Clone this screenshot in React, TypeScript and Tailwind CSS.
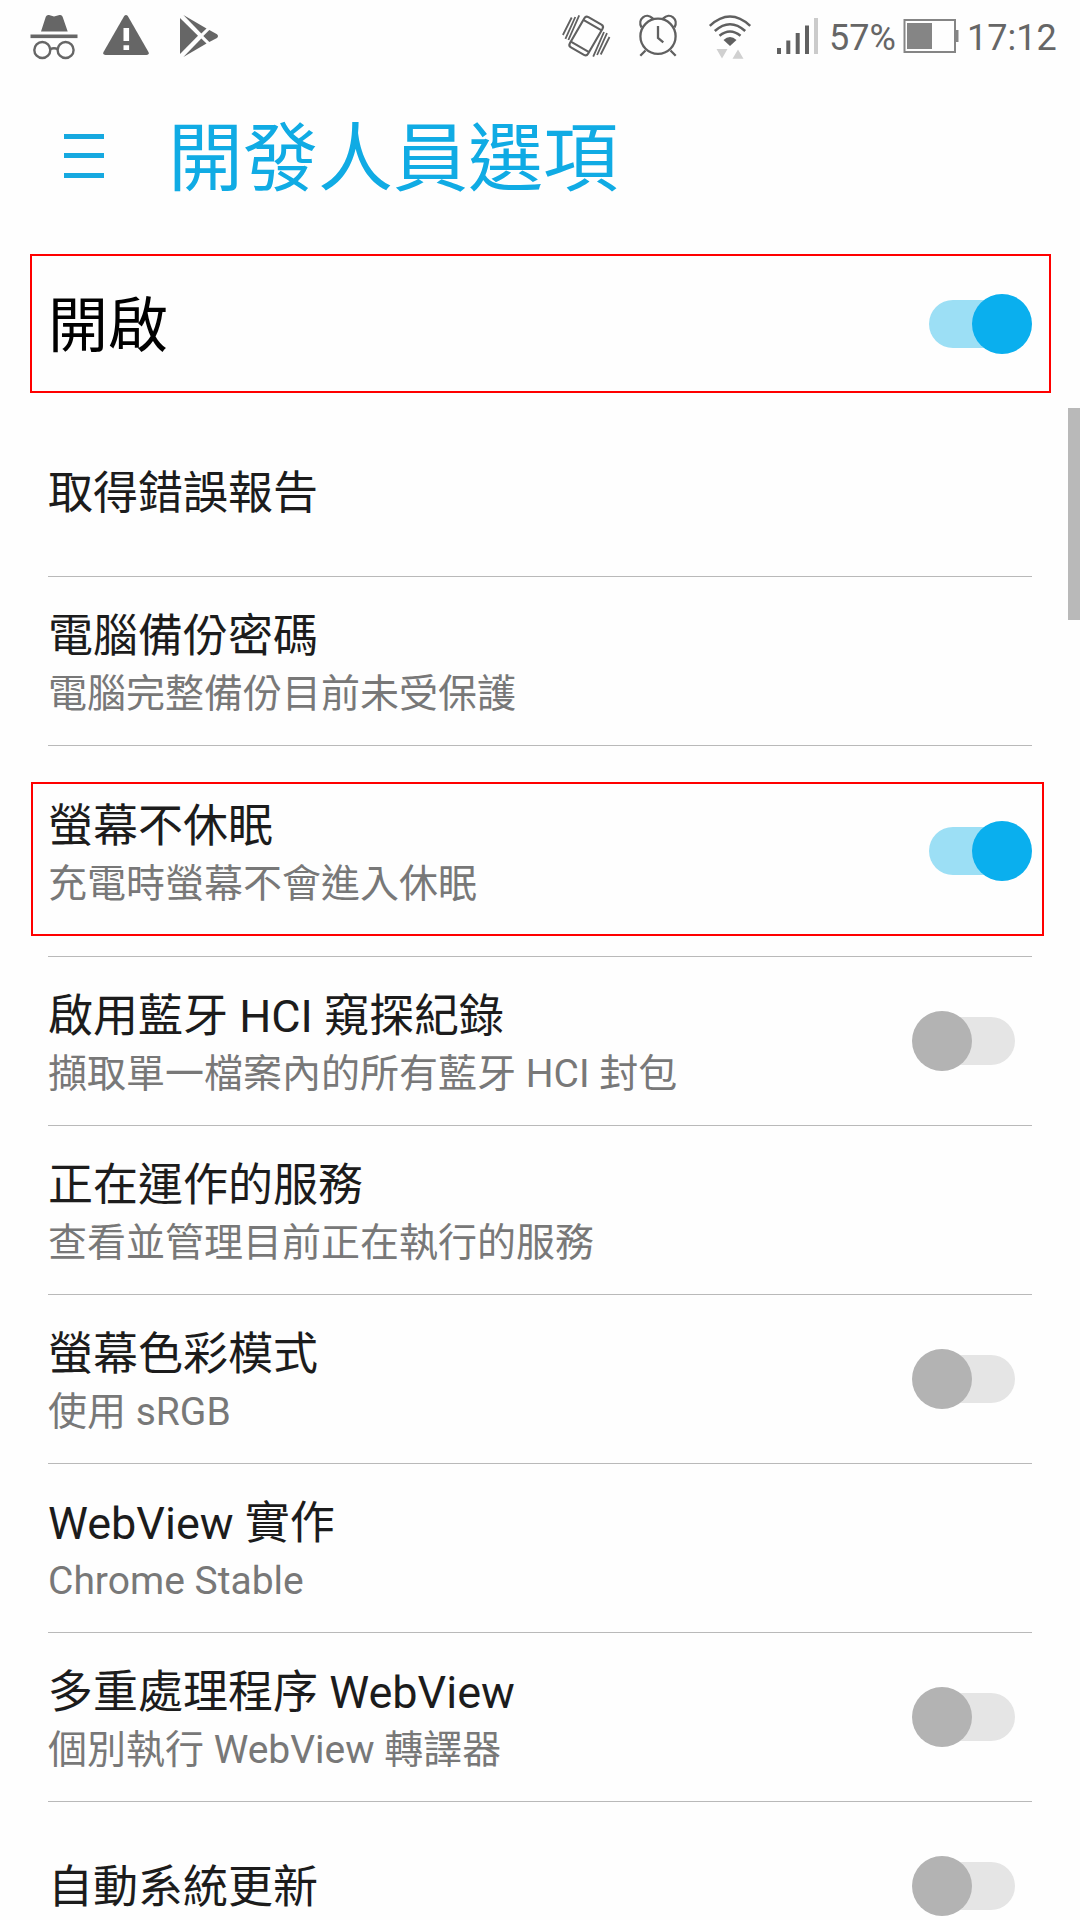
type Item = { title: string; summary?: string; on?: boolean; tall?: boolean };

const items: Item[] = [
  { title: '取得錯誤報告' },
  { title: '電腦備份密碼', summary: '電腦完整備份目前未受保護' },
  { title: '螢幕不休眠', summary: '充電時螢幕不會進入休眠', on: true, tall: true },
  { title: '啟用藍牙 HCI 窺探紀錄', summary: '擷取單一檔案內的所有藍牙 HCI 封包', on: false },
  { title: '正在運作的服務', summary: '查看並管理目前正在執行的服務' },
  { title: '螢幕色彩模式', summary: '使用 sRGB', on: false },
  { title: 'WebView 實作', summary: 'Chrome Stable' },
  { title: '多重處理程序 WebView', summary: '個別執行 WebView 轉譯器', on: false },
  { title: '自動系統更新', on: false },
];

function Switch({ on }: { on: boolean }) {
  return on ? (
    <div className="flex h-[60px] w-[103px] shrink-0 items-center">
      <div className="h-12 w-[84px] rounded-full bg-[#9cdff5]" />
      <div className="-ml-[41px] size-[60px] shrink-0 rounded-full bg-[#0aafee]" />
    </div>
  ) : (
    <div className="mr-[17px] flex h-[60px] w-[103px] shrink-0 items-center">
      <div className="z-10 size-[60px] shrink-0 rounded-full bg-[#b3b3b3]" />
      <div className="-ml-[41px] h-12 w-[84px] shrink-0 rounded-full bg-[#e5e5e5]" />
    </div>
  );
}

function StatusBar() {
  return (
    <header className="flex h-[72px] items-center text-[36px] leading-none text-[#666]">
      <svg className="ml-[30px] h-[72px] w-12" viewBox="30 0 48 72" fill="#666">
        <path d="M41 31.5 45.8 16.8Q46.8 14.6 49 15.1L54 16.6 59.5 15.1Q61.8 14.6 62.6 16.8L67.7 31.5Z" />
        <rect x="30.5" y="34.5" width="47" height="3.6" />
        <g fill="none" stroke="#666" strokeWidth="2.4">
          <circle cx="42.3" cy="50" r="8" />
          <circle cx="65.6" cy="50" r="8" />
          <path d="M50 49.3Q54 47.3 58 49.3" />
        </g>
      </svg>
      <svg className="ml-[25px] h-[72px] w-[46px]" viewBox="103 0 46 72">
        <path d="M124.2 16Q126 13.8 127.8 16L148.6 52.3Q149.3 55 146.5 55H105.5Q102.7 55 103.4 52.3Z" fill="#666" />
        <path d="M123.5 28h5.6v13h-5.6zM123.5 45.2h5.6v4.8h-5.6z" fill="#fff" />
      </svg>
      <svg className="ml-[31px] h-[72px] w-[39px]" viewBox="180 0 39 72" fill="#666">
        <path d="M180 18 198 35.8 180 54Z" />
        <path d="M183.4 15 206.5 28.5 201.3 33.5Z" />
        <path d="M183.4 57 206.5 43.6 201.3 38.6Z" />
        <path d="M209.3 30 217 34.2Q219 36 217 38L209.3 42 203.3 36Z" />
      </svg>
      <svg className="ml-[343px] h-[72px] w-[49px]" viewBox="562 0 49 72" fill="none" stroke="#606060" strokeWidth="2.1">
        <g transform="rotate(30 586.2 36)">
          <rect x="575.7" y="18.5" width="21" height="35" rx="3" />
          <path d="M575.7 23.5H596.7M575.7 48.5H596.7" />
        </g>
        <path
          d="M562.9 35 571.7 17.5M565.4 38.8 575.3 17M568.4 40 579.2 15.3M609.5 37 600.7 54.5M607 33.2 597.1 55M604 32 593.2 56.7"
          strokeWidth="1.8"
        />
      </svg>
      <svg className="ml-[27px] h-[72px] w-10" viewBox="638 0 40 72" fill="none" stroke="#606060" strokeWidth="2.3">
        <circle cx="658" cy="36.3" r="17.6" />
        <path d="M658 26V38L663.3 42.3" />
        <path d="M645.5 50.5 640.3 55.8M670.5 50.5 675.7 55.8" />
        <path d="M641.5 27.5C637 19.5 646 11.5 653 18.6M674.5 27.5C679 19.5 670 11.5 663 18.6" />
      </svg>
      <svg className="ml-[30px] h-[72px] w-11" viewBox="708 0 44 72" fill="none" stroke="#606060" strokeWidth="2.5">
        <path d="M709.8 25.8Q730 7.2 750.2 25.8" />
        <path d="M714.8 31Q730 17.4 745.2 31" />
        <path d="M719.5 35.8Q730 27.2 740.5 35.8" />
        <path d="M723.5 39.9Q730 34.3 736.5 39.9L730 46Z" fill="#606060" stroke="none" />
        <path d="M716.5 49H727.5L722 58.5ZM732.5 58.8H743.5L738 49.5Z" fill="#d0d0d0" stroke="none" />
      </svg>
      <svg className="ml-[25px] h-[72px] w-[42px]" viewBox="777 0 42 72" fill="#606060">
        <path d="M777 48h4v6h-4zM786.3 40.5h4V54h-4zM795.7 33h4v21h-4zM805 25.5h4V54h-4z" />
        <path d="M814 18h4v36h-4z" fill="#cbcbcb" />
      </svg>
      <span className="ml-[10px] w-[74px] whitespace-nowrap pt-1">57%</span>
      <svg className="h-[72px] w-[56px]" viewBox="903 0 56 72">
        <rect x="904.5" y="20" width="50.5" height="32" fill="none" stroke="#858585" strokeWidth="2" />
        <path d="M907 23h25v26h-25zM955 30h3.5v12H955z" fill="#858585" />
      </svg>
      <span className="ml-[8px] whitespace-nowrap pt-1">17:12</span>
    </header>
  );
}

export default function App() {
  return (
    <div
      lang="zh-Hant"
      className="relative h-[1920px] w-[1080px] overflow-hidden bg-[#fefefe] font-['Roboto','Noto_Sans_CJK_TC',sans-serif]"
    >
      <StatusBar />
      <div className="flex h-[168px] items-center pl-16">
        <div className="-mt-px flex w-10 flex-col gap-[14.5px]">
          <div className="h-[5px] bg-[#16a9e0]" />
          <div className="h-[5px] bg-[#16a9e0]" />
          <div className="h-[5px] bg-[#16a9e0]" />
        </div>
        <h1 className="ml-[64px] pt-[6px] text-[75px] leading-none text-[#10abe4]">開發人員選項</h1>
      </div>
      <div className="flex h-[168px] items-center justify-between px-12 text-black">
        <span className="pt-[6px] text-[60px] leading-none">開啟</span>
        <Switch on />
      </div>
      <ul>
        {items.map((item) => (
          <li
            key={item.title}
            className={`mx-12 flex items-center justify-between border-b border-[#b9b9b9] ${item.tall ? 'h-[211px]' : 'h-[169px]'}`}
          >
            <div className={`flex flex-col ${item.summary ? 'pt-[7px]' : 'pt-[3px]'}`}>
              <span className="text-[45px] leading-[60px] text-[#1c1c1c]">{item.title}</span>
              {item.summary && <span className="text-[39px] leading-[55px] text-[#787878]">{item.summary}</span>}
            </div>
            {item.on !== undefined && <Switch on={item.on} />}
          </li>
        ))}
      </ul>
      <div className="absolute left-[30px] top-[254px] h-[139px] w-[1021px] border-2 border-[#f00]" />
      <div className="absolute left-[31px] top-[782px] h-[154px] w-[1013px] border-2 border-[#f00]" />
      <div className="absolute right-0 top-[408px] h-[212px] w-3 bg-[#b9b9b9]" />
    </div>
  );
}
